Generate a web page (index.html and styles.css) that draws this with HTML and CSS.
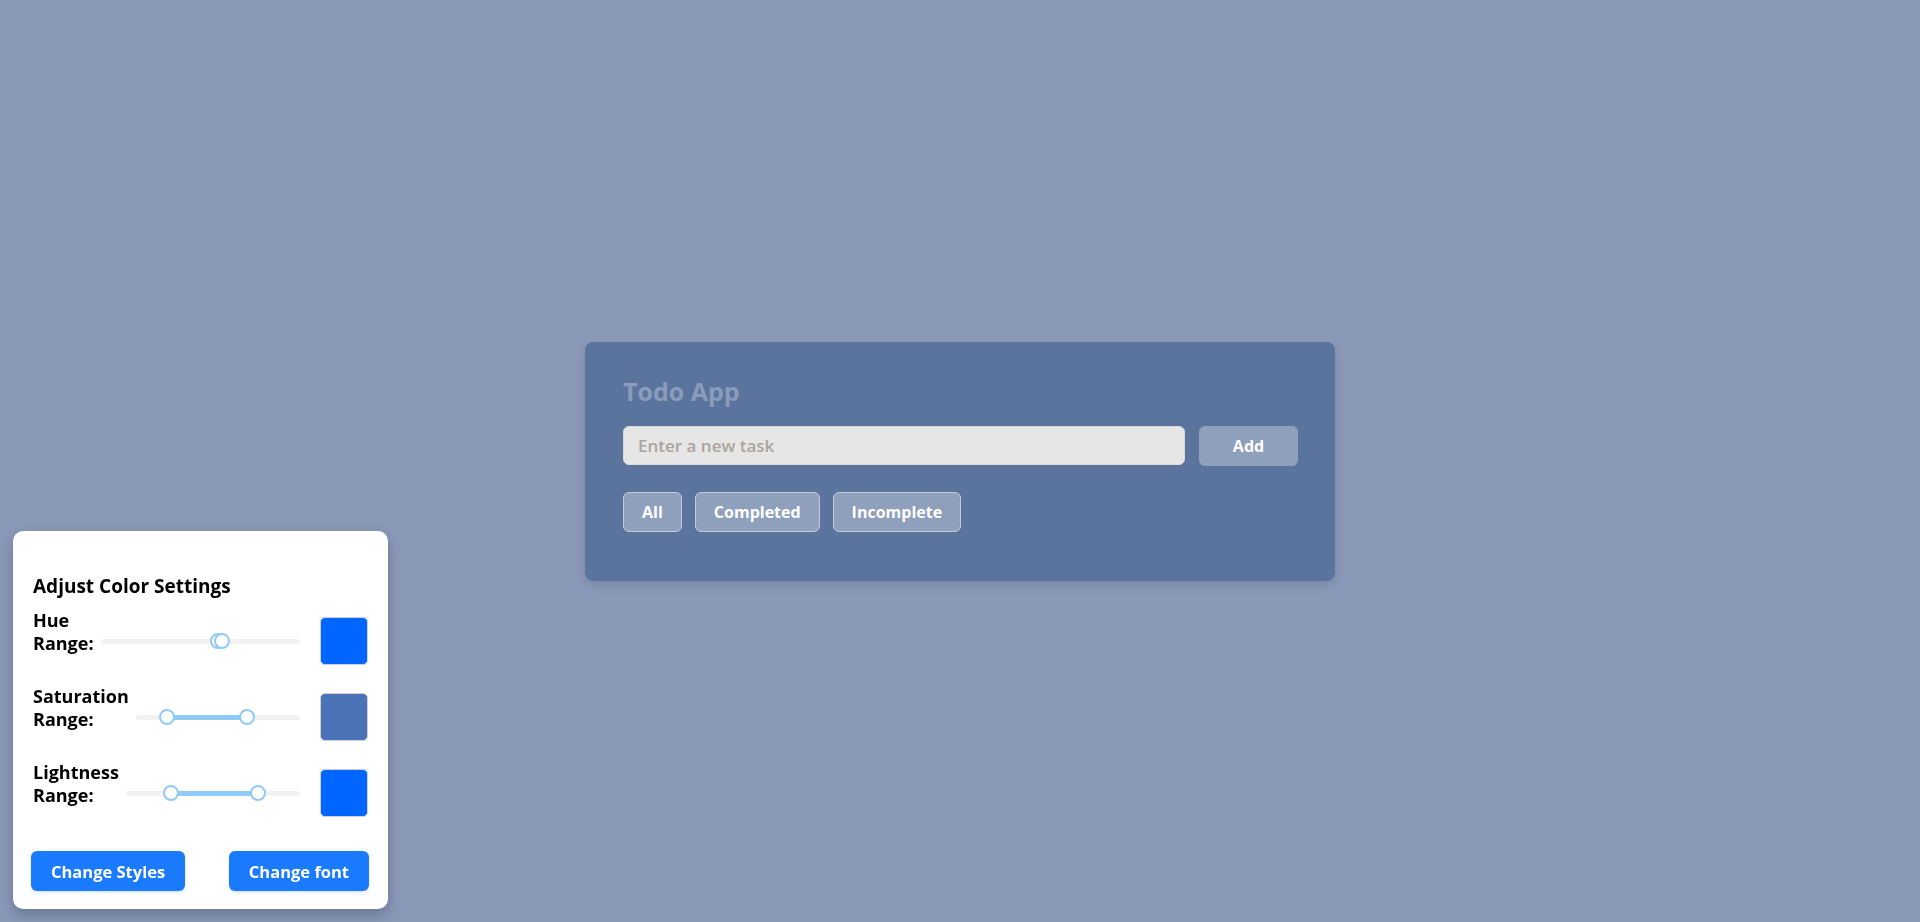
FILE: index.html
```html
<!DOCTYPE html>
<html lang="en">
<head>
<meta charset="utf-8">
<title>Todo App</title>
<link rel="stylesheet" href="styles.css">
</head>
<body>
<main class="page">
  <section class="card">
    <h1 class="card-title">Todo App</h1>
    <div class="add-row">
      <input class="task-input" type="text" placeholder="Enter a new task">
      <button class="add-btn">Add</button>
    </div>
    <div class="filters">
      <button class="filter-btn">All</button>
      <button class="filter-btn">Completed</button>
      <button class="filter-btn">Incomplete</button>
    </div>
  </section>
</main>

<aside class="panel">
  <h2 class="panel-title">Adjust Color Settings</h2>
  <div class="setting">
    <span class="setting-label">Hue Range:</span>
    <div class="slider">
      <div class="track"></div>
      <div class="fill" style="left:59%;width:2%"></div>
      <div class="thumb" style="left:59%"></div>
      <div class="thumb" style="left:61%"></div>
    </div>
    <div class="swatch swatch-hue"></div>
  </div>
  <div class="setting">
    <span class="setting-label">Saturation Range:</span>
    <div class="slider">
      <div class="track"></div>
      <div class="fill" style="left:19%;width:49%"></div>
      <div class="thumb" style="left:19%"></div>
      <div class="thumb" style="left:68%"></div>
    </div>
    <div class="swatch swatch-sat"></div>
  </div>
  <div class="setting setting-last">
    <span class="setting-label">Lightness Range:</span>
    <div class="slider">
      <div class="track"></div>
      <div class="fill" style="left:26%;width:50%"></div>
      <div class="thumb" style="left:26%"></div>
      <div class="thumb" style="left:76%"></div>
    </div>
    <div class="swatch swatch-light"></div>
  </div>
  <div class="panel-actions">
    <button class="blue-btn">Change Styles</button>
    <button class="blue-btn">Change font</button>
  </div>
</aside>
</body>
</html>
```

FILE: styles.css
```css
* { box-sizing: border-box; }

html, body {
  margin: 0;
  height: 100%;
}

body {
  background: #8a99b7;
  font-family: "Open Sans", "Noto Sans", sans-serif;
  overflow: hidden;
}

.page {
  height: 100vh;
  display: flex;
  align-items: center;
  justify-content: center;
}

.card {
  width: 750px;
  background: #5b749d;
  border-radius: 8px;
  padding: 34px 37px 49px 38px;
  box-shadow: 0 4px 10px rgba(40, 55, 90, 0.18);
}

.card-title {
  margin: 0 0 19px;
  font-size: 25px;
  line-height: 31px;
  font-weight: 700;
  color: #8a9cbc;
}

.add-row {
  display: flex;
  gap: 14px;
}

.task-input {
  flex: 1;
  height: 39px;
  border: 1px solid #d9d9d9;
  border-radius: 6px;
  background: #e6e6e6;
  padding: 0 14px;
  font-family: inherit;
  font-size: 17px;
  font-weight: 600;
  color: #333;
  outline: none;
}

.task-input::placeholder {
  color: #aaa59f;
}

.add-btn {
  width: 99px;
  height: 40px;
  border: none;
  border-radius: 6px;
  background: #8fa0bd;
  color: #fff;
  font-family: inherit;
  font-size: 16px;
  font-weight: 700;
}

.filters {
  display: flex;
  gap: 13px;
  margin-top: 26px;
}

.filter-btn {
  height: 40px;
  padding: 0 18px;
  border: 1px solid #c3cad9;
  border-radius: 6px;
  background: #8fa0bd;
  color: #fff;
  font-family: inherit;
  font-size: 16px;
  font-weight: 700;
}

.panel {
  position: fixed;
  left: 13px;
  bottom: 13px;
  width: 375px;
  background: #fff;
  border-radius: 10px;
  padding: 44px 20px 18px 20px;
  box-shadow: 0 6px 14px rgba(30, 40, 70, 0.3);
}

.panel-title {
  margin: 0 0 19px;
  font-size: 19px;
  line-height: 23px;
  font-weight: 700;
  color: #000;
}

.setting {
  display: flex;
  align-items: center;
  height: 48px;
  margin-bottom: 28px;
}

.setting-last {
  margin-bottom: 34px;
}

.setting-label {
  width: min-content;
  align-self: flex-start;
  margin-top: -8px;
  font-size: 18px;
  line-height: 23px;
  font-weight: 700;
  color: #000;
}

.slider {
  flex: 1;
  position: relative;
  height: 16px;
  margin: 0 20px 0 7px;
}

.track {
  position: absolute;
  left: 0;
  right: 0;
  top: 6px;
  height: 5px;
  border-radius: 3px;
  background: #f2f2f2;
}

.fill {
  position: absolute;
  top: 6px;
  height: 5px;
  background: #90caf9;
}

.thumb {
  position: absolute;
  top: 0;
  width: 16px;
  height: 16px;
  margin-left: -8px;
  border-radius: 50%;
  background: #fff;
  border: 2px solid #90caf9;
}

.swatch {
  width: 48px;
  height: 48px;
  border-radius: 5px;
  border: 1px solid #d0d0d0;
  flex-shrink: 0;
}

.swatch-hue { background: #0066ff; }
.swatch-sat { background: #4a73b8; }
.swatch-light { background: #0066ff; }

.panel-actions {
  display: flex;
  justify-content: space-between;
  margin: 0 -1px 0 -2px;
}

.blue-btn {
  height: 40px;
  padding: 0 20px;
  border: none;
  border-radius: 6px;
  background: #1a7bff;
  color: #fff;
  font-family: inherit;
  font-size: 16.5px;
  font-weight: 700;
  box-shadow: 0 2px 3px rgba(26, 123, 255, 0.15);
}
```
